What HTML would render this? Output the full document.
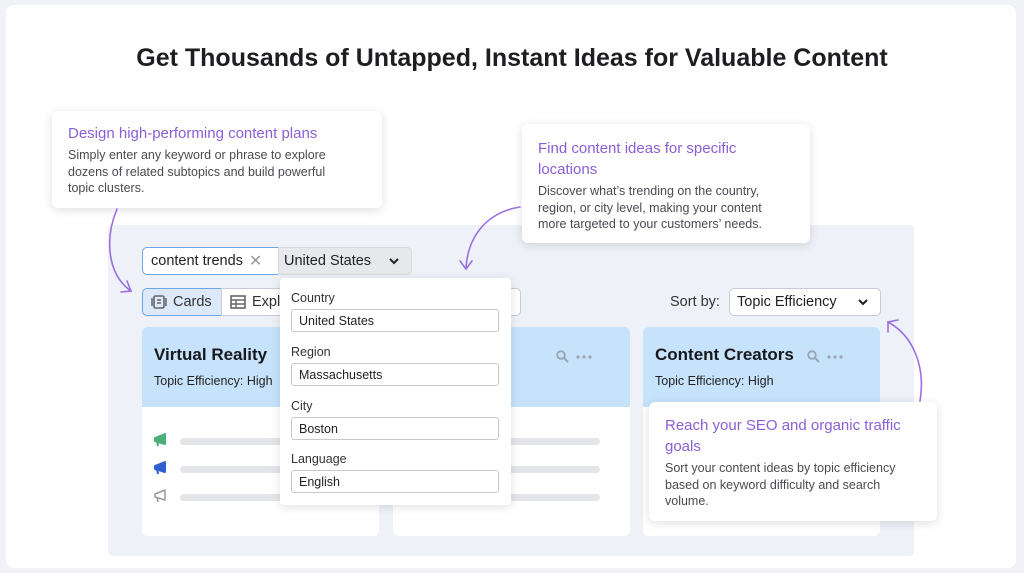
<!DOCTYPE html>
<html><head><meta charset="utf-8"><style>
*{box-sizing:border-box;margin:0;padding:0}
body{width:1024px;height:573px;background:#f1f2f5;font-family:"Liberation Sans",sans-serif;position:relative;overflow:hidden;color:#1f1f24}
.abs{position:absolute}
.card{position:absolute;left:6px;top:5px;width:1010px;height:563px;background:#fff;border-radius:8px}
h1{position:absolute;left:0;width:1024px;top:44px;text-align:center;font-size:25px;font-weight:bold;color:#1e1e22}
.call{position:absolute;background:#fff;border-radius:6px;box-shadow:0 2px 10px rgba(0,0,0,.13);padding:12px 16px}
.call .t{color:#8a5fd6;font-size:15px;line-height:21px}
.call .d{color:#4a4a52;font-size:12.5px;line-height:16.5px;margin-top:3px}
.panel{position:absolute;left:108px;top:225px;width:806px;height:331px;background:#eef1f7;border-radius:4px}
.box{position:absolute;border:1px solid #c8cbd3;border-radius:5px;background:#fff;font-size:14.5px;padding-left:8px;display:flex;align-items:center}
.ccard{position:absolute;top:327px;width:237px;height:209px;background:#fff;border-radius:6px;overflow:hidden}
.ccard .hd{height:80px;background:#c7e3fb;padding:18px 12px}
.hd .n{font-size:17px;font-weight:bold;color:#17171c}
.hd .e{font-size:12.5px;margin-top:9px;color:#222}
.bar{position:absolute;height:7px;background:#e4e5e9;border-radius:4px}
.dd{position:absolute;left:280px;top:278px;width:231px;height:227px;background:#fff;border-radius:4px;box-shadow:0 2px 10px rgba(0,0,0,.12)}
.dd .l{position:absolute;left:11px;font-size:12.5px;color:#333}
.dd .f{position:absolute;left:11px;width:208px;height:23px;border:1px solid #c6c8ce;border-radius:3px;font-size:12.5px;padding:4px 7px;color:#222}
.chev{margin-left:auto;margin-right:12px}
</style></head><body>
<div class="card"></div>
<h1>Get Thousands of Untapped, Instant Ideas for Valuable Content</h1>
<div class="panel"></div>

<div class="call" style="left:52px;top:111px;width:330px;height:97px">
<div class="t">Design high-performing content plans</div>
<div class="d" style="width:285px">Simply enter any keyword or phrase to explore dozens of related subtopics and build powerful topic clusters.</div></div>
<div class="call" style="left:522px;top:124px;width:288px;height:119px;padding-top:14px">
<div class="t" style="width:225px">Find content ideas for specific locations</div>
<div class="d" style="width:250px">Discover what’s trending on the country, region, or city level, making your content more targeted to your customers’ needs.</div></div>

<svg class="abs" style="left:0;top:0" width="1024" height="573" fill="none" stroke="#9b6fe0" stroke-width="1.6" stroke-linecap="round">
<path d="M117 209 C104 240 108 275 131 291"/><path d="M121 292 L131 291 L127 281"/>
<path d="M520 207 C488 212 468 235 466 268"/><path d="M460 261 L466 269 L472 261"/>
<path d="M920 401 C926 365 912 335 888 322"/><path d="M888 332 L888 322 L898 320"/>
</svg>

<div class="box" style="left:142px;top:247px;width:137px;height:28px;border-color:#6aa6e8;border-radius:5px 0 0 5px">content trends <span style="color:#999;margin-left:6px;font-size:16px">✕</span></div>
<div class="box" style="left:278px;top:247px;width:134px;height:28px;background:#e6e8ec;border-radius:0 5px 5px 0;border-color:#d7d9de;padding-left:5px">United States <svg class="chev" width="10" height="7"><path d="M1 1l4 4 4-4" stroke="#222" stroke-width="2" fill="none"/></svg></div>

<div class="box" style="left:142px;top:288px;width:80px;height:28px;background:#dbe9fb;border-color:#6aa6e8;border-radius:5px 0 0 5px;color:#333">
<svg width="16" height="14" style="margin-right:6px"><rect x="3" y="1" width="10" height="12" rx="1.5" fill="none" stroke="#666" stroke-width="1.6"/><path d="M1 3v8M15 3v8M6 5h4M6 8h4" stroke="#666" stroke-width="1.5"/></svg>Cards</div>
<div class="box" style="left:221px;top:288px;width:300px;height:28px;border-radius:0 5px 5px 0;color:#333">
<svg width="16" height="14" style="margin-right:6px"><rect x="1" y="1" width="14" height="12" fill="none" stroke="#666" stroke-width="1.6"/><path d="M1 5h14M1 9h14M6 5v8" stroke="#666" stroke-width="1.4"/></svg>Expl</div>

<div class="abs" style="left:670px;top:294px;font-size:14.5px;color:#333">Sort by:</div>
<div class="box" style="left:729px;top:288px;width:152px;height:28px;padding-left:7px">Topic Efficiency <svg class="chev" width="10" height="7"><path d="M1 1l4 4 4-4" stroke="#222" stroke-width="2" fill="none"/></svg></div>

<div class="ccard" style="left:142px"><div class="hd"><div class="n">Virtual Reality</div><div class="e">Topic Efficiency: High</div></div></div>
<div class="ccard" style="left:393px"><div class="hd"></div></div>
<div class="ccard" style="left:643px"><div class="hd"><div class="n">Content Creators</div><div class="e">Topic Efficiency: High</div></div></div>
<svg class="abs" style="left:556px;top:350px" width="40" height="14"><circle cx="5" cy="5" r="3.8" stroke="#9aa3b5" stroke-width="1.8" fill="none"/><path d="M8 8l4 4" stroke="#9aa3b5" stroke-width="2"/><circle cx="22" cy="7" r="1.6" fill="#9aa3b5"/><circle cx="28" cy="7" r="1.6" fill="#9aa3b5"/><circle cx="34" cy="7" r="1.6" fill="#9aa3b5"/></svg>
<svg class="abs" style="left:807px;top:350px" width="40" height="14"><circle cx="5" cy="5" r="3.8" stroke="#9aa3b5" stroke-width="1.8" fill="none"/><path d="M8 8l4 4" stroke="#9aa3b5" stroke-width="2"/><circle cx="22" cy="7" r="1.6" fill="#9aa3b5"/><circle cx="28" cy="7" r="1.6" fill="#9aa3b5"/><circle cx="34" cy="7" r="1.6" fill="#9aa3b5"/></svg>

<div class="bar" style="left:180px;top:438px;width:120px"></div>
<div class="bar" style="left:180px;top:466px;width:120px"></div>
<div class="bar" style="left:180px;top:494px;width:120px"></div>
<div class="bar" style="left:500px;top:438px;width:100px"></div>
<div class="bar" style="left:500px;top:466px;width:100px"></div>
<div class="bar" style="left:500px;top:494px;width:100px"></div>
<svg class="abs" style="left:153px;top:433px" width="16" height="72">
<path d="M2 5 L12 1 V11 L2 8 Z M4 8 L5 13" stroke="#4cae7a" fill="#4cae7a" stroke-width="2" stroke-linejoin="round"/>
<path d="M2 33 L12 29 V39 L2 36 Z M4 36 L5 41" stroke="#2f5fd0" fill="#2f5fd0" stroke-width="2" stroke-linejoin="round"/>
<path d="M2 61 L12 57 V67 L2 64 Z M4 64 L5 69" stroke="#999" fill="none" stroke-width="1.5" stroke-linejoin="round"/>
</svg>

<div class="dd">
<div class="l" style="top:13px">Country</div><div class="f" style="top:31px">United States</div>
<div class="l" style="top:67px">Region</div><div class="f" style="top:85px">Massachusetts</div>
<div class="l" style="top:121px">City</div><div class="f" style="top:139px">Boston</div>
<div class="l" style="top:174px">Language</div><div class="f" style="top:192px">English</div>
</div>

<div class="call" style="left:649px;top:402px;width:288px;height:119px;padding-top:13px">
<div class="t" style="width:250px">Reach your SEO and organic traffic goals</div>
<div class="d" style="width:256px">Sort your content ideas by topic efficiency based on keyword difficulty and search volume.</div></div>
</body></html>
